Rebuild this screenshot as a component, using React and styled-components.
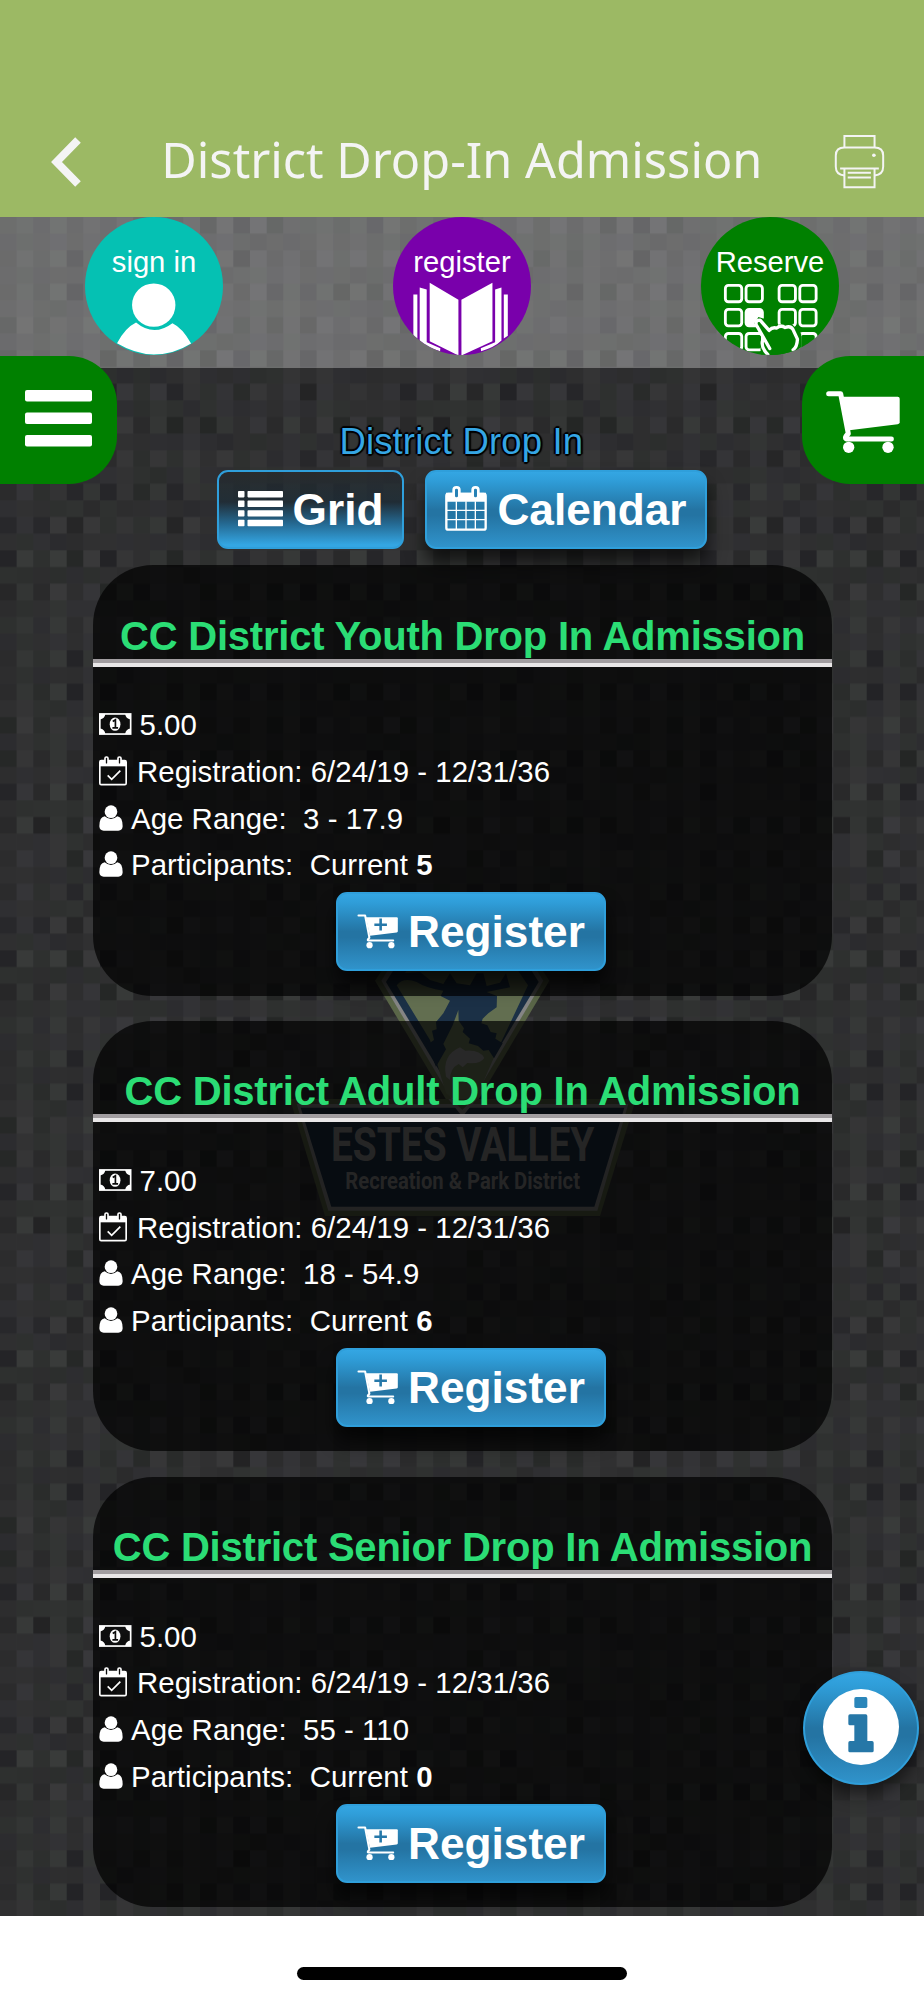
import styled, { createGlobalStyle, css } from "styled-components";

const GlobalStyle = createGlobalStyle`
  * {
    box-sizing: border-box;
  }

  body {
    margin: 0;
    background-color: #fff;
    font-family: "Liberation Sans", Arial, sans-serif;
  }
`;

const Screen = styled.div`
  display: flex;
  flex-direction: column;
  width: 924px;
  height: 2000px;
  overflow: hidden;
`;

const AppBar = styled.header`
  display: flex;
  align-items: center;
  justify-content: space-between;
  height: 216.67px;
  padding: 107px 41px 0 51px;
  flex-shrink: 0;
  background-color: #9cb964;
  color: #f4f4f4;
`;

const AppTitle = styled.h1`
  margin: 0;
  padding: 0 0 5px 8px;
  font-family: "Noto Sans", "Open Sans", sans-serif;
  font-size: 48.6px;
  font-weight: 400;
  line-height: 66px;
  white-space: nowrap;
`;

const Page = styled.main`
  position: relative;
  height: 1699.3px;
  flex-shrink: 0;
  overflow: hidden;
  background-color: #2d2d2e;
`;

const Backdrop = styled.svg`
  position: absolute;
  top: 0;
  left: 0;
`;

const Watermark = styled.svg`
  position: absolute;
  top: 743.33px;
  left: 270px;
`;

const Content = styled.div`
  position: relative;
`;

const QuickLinks = styled.nav`
  display: flex;
  justify-content: space-around;
  height: 151.3px;
  background-color: rgba(255, 255, 255, 0.3);
`;

const QuickLink = styled.a`
  position: relative;
  display: block;
  width: 138.5px;
  height: 138.5px;
  padding-top: 29px;
  overflow: hidden;
  border-radius: 50%;
  background-color: ${(props) => props.$color};
  color: #fff;
  font-size: 29.2px;
  line-height: 32px;
  text-align: center;
  white-space: nowrap;

  & > svg {
    position: absolute;
    top: 0;
    left: 0;
  }
`;

const Toolbar = styled.div`
  display: flex;
  justify-content: space-between;
  height: 102px;
  margin-top: -12px;
`;

const SideTab = styled.button`
  width: ${(props) => (props.$right ? "122.5px" : "117px")};
  height: 128px;
  padding: ${(props) => (props.$right ? "5px 0 0 24px" : "0 0 2px 24px")};
  display: flex;
  align-items: center;
  border: 0;
  border-radius: ${(props) => (props.$right ? "48px 0 0 48px" : "0 48px 48px 0")};
  background-color: #008000;
`;

const Heading = styled.h2`
  margin: 66px 0 0;
  padding-left: 4px;
  color: #35a6e4;
  font-size: 36.5px;
  font-weight: 400;
  line-height: 40px;
  letter-spacing: 0.15px;
  text-shadow: 2px 0 1px #000, -2px 0 1px #000, 0 2px 1px #000, 0 -2px 1px #000,
    1px 1px 1px #000, -1px -1px 1px #000;
`;

const ViewSwitch = styled.div`
  display: flex;
  justify-content: center;
  gap: 21px;
  margin-top: 11.7px;
`;

const Button = styled.button`
  display: inline-flex;
  align-items: center;
  justify-content: center;
  gap: 10px;
  width: ${(props) => props.$width}px;
  height: 79px;
  padding: 1px 0 0;
  border: 2px solid #2f9fdb;
  border-radius: 11px;
  color: #fff;
  font-family: inherit;
  font-size: 44.2px;
  font-weight: 700;
  background: linear-gradient(#34a6e3 0%, #2f9dd8 12%, #2474a3 50%, #2474a3 58%, #3093cb 100%);
  box-shadow: 0 14px 18px rgba(0, 0, 0, 0.65);

  & > svg {
    margin-top: -2px;
  }

  ${(props) =>
    props.$active &&
    css`
      background: linear-gradient(
        rgba(36, 40, 43, 0.6) 0%,
        rgba(28, 44, 55, 0.75) 40%,
        #24678f 68%,
        #34a6e3 97%
      );
      box-shadow: none;
    `}
`;

const CardList = styled.section`
  display: flex;
  flex-direction: column;
  gap: 25.3px;
  width: 739px;
  margin: 16.5px 0 0 93px;
`;

const Card = styled.article`
  height: 430.5px;
  border-radius: 60px;
  background-color: rgba(0, 0, 0, 0.7);
  color: #fff;
`;

const CardTitle = styled.h3`
  display: flex;
  align-items: flex-end;
  justify-content: center;
  height: 101.5px;
  margin: 0;
  padding-bottom: 5px;
  border-bottom: 4px solid #e9e7e8;
  box-shadow: inset 0 -4px #a19da0;
  color: #2bdd75;
  font-size: 40px;
  letter-spacing: -0.22px;
  line-height: 44px;
  white-space: nowrap;
`;

const Details = styled.ul`
  margin: 0;
  padding: 35px 0 0 6px;
  list-style: none;
`;

const Detail = styled.li`
  display: flex;
  align-items: center;
  gap: ${(props) => props.$gap ?? 8}px;
  height: 46.8px;
  font-size: 29.4px;
  letter-spacing: 0.04px;
  white-space: pre;

  & > svg {
    margin-bottom: 2px;
  }
`;

const CardAction = styled.div`
  display: flex;
  margin: 3.5px 0 0 243px;
`;

const InfoButton = styled.button`
  position: absolute;
  top: 1454.5px;
  right: 5px;
  display: grid;
  place-items: center;
  width: 116px;
  height: 114px;
  padding: 0 0 3px;
  border: 2px solid #2f9fdb;
  border-radius: 50%;
  background: linear-gradient(#34a6e3 0%, #2f9dd8 12%, #2474a3 50%, #2474a3 58%, #3093cb 100%);
  box-shadow: 0 10px 16px rgba(0, 0, 0, 0.5);
`;

const HomeArea = styled.footer`
  display: flex;
  justify-content: center;
  flex: 1;
  padding-top: 51px;
  background-color: #fff;
`;

const HomeIndicator = styled.div`
  width: 330px;
  height: 13px;
  border-radius: 7px;
  background-color: #000;
`;

// woven squares: even columns stay dark, odd columns are lit
const CELL = 16.667;
const TILE = 24;

function cellColor(col, row) {
  const seed = Math.sin(col * 127.1 + row * 311.7) * 43758.5453;
  const noise = seed - Math.floor(seed);
  const odd = col % 2 === 1;
  let tone = 45;
  if (odd && row % 2 === 1) tone = 50 + noise * 7;
  if (odd && row % 2 === 0) tone = 42 + noise * 11;
  if (!odd && row % 2 === 1) tone = 35 + noise * 13;
  if (!odd && row % 2 === 0) tone = 44 + noise * 4;
  const tint = Math.floor(noise * 97) % 3;
  return `rgb(${tone}, ${tone + (tint === 1 ? 2 : 0)}, ${tone + (tint === 2 ? 3 : 1)})`;
}

const cells = Array.from({ length: TILE * TILE }, (_, i) => ({
  col: i % TILE,
  row: Math.floor(i / TILE),
}));

function Texture() {
  return (
    <Backdrop width="924" height="1700">
      <defs>
        <pattern id="weave" width="400" height="400" y="-16.67" patternUnits="userSpaceOnUse">
          {cells.map(({ col, row }) => (
            <rect
              key={`${col}-${row}`}
              x={col * CELL}
              y={row * CELL}
              width={CELL + 0.3}
              height={CELL + 0.3}
              fill={cellColor(col, row)}
            />
          ))}
        </pattern>
      </defs>
      <rect width="924" height="1700" fill="url(#weave)" />
    </Backdrop>
  );
}

function DistrictLogo() {
  return (
    <Watermark width="390" height="280" viewBox="0 0 1170 840">
      <path d="M315 62L357 0H797L838 62L577 500Z" fill="#5a6648" />
      <path d="M334 62L372 0H782L820 62L577 470Z" fill="#858585" />
      <path d="M348 66L390 0H764L806 66L577 447Z" fill="#1b3046" />
      <path d="M380 76L425 10H729L774 76L672 292L625 400L577 440L528 400L480 240Z" fill="#626e50" />
      <path
        d="M380 76Q400 50 440 66Q470 85 520 92L512 108L540 122L520 160L498 186L500 208L486 212L492 240L478 250L466 240L498 320L528 268L520 252L548 196L565 150L566 182L582 205L578 216L600 236L596 250L624 258L640 272L656 270L672 295L698 250L676 236L680 220L662 216L652 196L634 190L638 176L655 160L680 142L681 108L650 96L720 82L708 40L690 68L650 78L640 40H620L600 76L560 70L540 40L520 72L480 60L450 36L400 40Z"
        fill="#1b3046"
      />
      <path
        d="M528 350Q515 285 570 262L586 272Q630 268 643 294Q630 314 592 309L578 322L566 312Q540 325 540 360Z"
        fill="#858585"
      />
      <path d="M60 417H1098L990 768H165Z" fill="#4f573d" />
      <path d="M80 432H1075L982 752H175Z" fill="#777" />
      <path d="M92 443H1063L973 740H184Z" fill="#18283b" />
      <path d="M535 417H620L577 470Z" fill="#777" />
      <path d="M545 417H610L577 450Z" fill="#4f573d" />
      <g fill="#7d7d7d" fontFamily="Roboto, sans-serif" fontWeight="700">
        <text x="183" y="604" fontSize="142" textLength="790" lengthAdjust="spacingAndGlyphs">
          ESTES VALLEY
        </text>
        <text x="226" y="686" fontSize="70" textLength="704" lengthAdjust="spacingAndGlyphs">
          Recreation &amp; Park District
        </text>
      </g>
    </Watermark>
  );
}

function BackIcon() {
  return (
    <svg width="30" height="50" viewBox="0 0 30 50" fill="none" stroke="currentColor">
      <path d="M27 3L5.5 25L27 47" strokeWidth="7.8" />
    </svg>
  );
}

function PrinterIcon() {
  return (
    <svg width="48.3" height="53" viewBox="1115 104 145 160" fill="none" stroke="currentColor" strokeWidth="6" overflow="visible">
      <path d="M1143 142V107H1234V142" />
      <path d="M1143 226Q1117 224 1117 200V166Q1117 142 1143 142H1234Q1260 142 1260 166V200Q1260 224 1234 226" />
      <path d="M1130 205H1247M1143 205V262H1234V205M1153 218H1223M1153 232H1223" />
      <circle cx="1232" cy="165" r="5.5" fill="currentColor" stroke="none" />
    </svg>
  );
}

function PersonArt() {
  return (
    <svg width="138.5" height="138.5" viewBox="0 0 415 415" fill="#fff">
      <circle cx="206" cy="264" r="65" />
      <path d="M153 316Q206 360 262 318Q292 332 318 379Q265 412 206 412Q150 410 96 378Q120 332 153 316Z" />
    </svg>
  );
}

function BookArt() {
  return (
    <svg width="138.5" height="138.5" viewBox="0 0 415 415" fill="#fff">
      <path d="M110 197L196 248V415L110 372Z" />
      <path d="M80 211L101 217V375L142 393L141 402Q100 390 80 370Z" />
      <path d="M61 232H73V364L61 356Z" />
      <g transform="translate(405 0) scale(-1 1)">
        <path d="M107 197L200 248V415L107 372Z" />
        <path d="M80 211L99 217V375L142 393L141 402Q100 390 80 370Z" />
        <path d="M61 232H73V364L61 356Z" />
      </g>
    </svg>
  );
}

function SeatsArt() {
  return (
    <svg width="138.5" height="138.5" viewBox="0 0 415 415" fill="none" stroke="#fff" strokeWidth="8.5">
      {[205, 277, 349].map((y) =>
        [73, 135, 234, 296].map((x) => (
          <rect
            key={`${x}-${y}`}
            x={x}
            y={y}
            width="49"
            height="49"
            rx="9"
            fill={x === 135 && y === 277 ? "#fff" : "none"}
          />
        ))
      )}
      <path d="M160 318L172 300L190 305L214 325L270 318L300 350L302 415H180L176 370L190 368Z" fill="#008000" stroke="none" />
      <path
        d="M206 394L165 322Q163 308 177 309L204 340Q214 329 227 333Q238 323 252 331Q268 325 275 336L289 366Q288 390 276 398M184 372Q180 392 200 412"
        strokeWidth="10"
        strokeLinecap="round"
        strokeLinejoin="round"
      />
    </svg>
  );
}

function MenuIcon() {
  return (
    <svg width="68" height="57" fill="#fff">
      <rect x="1" width="67" height="11.5" rx="2" />
      <rect x="1" y="22.5" width="67" height="11.5" rx="2" />
      <rect x="1" y="45" width="67" height="11.5" rx="2" />
    </svg>
  );
}

function CartIcon({ width, plus }) {
  return (
    <svg width={width} height={(width * 187) / 222} viewBox="0 0 222 187" fill="#fff">
      <path
        d="M8 8H44L67 128Q50 144 66 144H196"
        fill="none"
        stroke="#fff"
        strokeWidth={plus ? 11 : 15}
        strokeLinecap="round"
        strokeLinejoin="round"
      />
      <path d="M48 17H215Q221 17 221 23V94Q221 99 215 100L70 118Z" />
      <circle cx="68" cy="169" r="17" />
      <circle cx="186" cy="169" r="17" />
      {plus && <path d="M128 25V90M94 58H162" stroke="#2678a9" strokeWidth="14" />}
    </svg>
  );
}

function ListIcon() {
  return (
    <svg width="45" height="36" fill="#fff">
      {[0, 9.6, 19.2, 28.8].map((y) => (
        <g key={y}>
          <rect y={y} width="6.5" height="6.4" rx="0.8" />
          <rect x="9.5" y={y} width="35.5" height="6.4" rx="0.8" />
        </g>
      ))}
    </svg>
  );
}

function CalendarIcon() {
  return (
    <svg width="42" height="45" viewBox="0 0 126 135" fill="none" stroke="#fff">
      <rect x="4" y="24" width="118" height="107" rx="6" strokeWidth="7" />
      <path d="M3 20H123V47H3Z" fill="#fff" stroke="none" />
      <rect x="26" y="4" width="17" height="34" rx="8" fill="#2781b5" strokeWidth="8" />
      <rect x="83" y="4" width="17" height="34" rx="8" fill="#2781b5" strokeWidth="8" />
      <path d="M34 46V130M63 46V130M91 46V130M4 73H122M4 101H122" strokeWidth="4" />
    </svg>
  );
}

function MoneyIcon() {
  return (
    <svg width="32.5" height="22" viewBox="0 0 97 65" fill="none" stroke="#fff">
      <rect x="2.5" y="2.5" width="92" height="60" strokeWidth="5" />
      <path d="M3 3H19Q17 17 3 19ZM94 3H78Q80 17 94 19ZM3 62H19Q17 48 3 46ZM94 62H78Q80 48 94 46Z" fill="#fff" stroke="none" />
      <ellipse cx="48" cy="33" rx="16" ry="20" fill="#fff" stroke="none" />
      <path d="M41 25L49 20V44M40 44H57" stroke="#0c0c0c" strokeWidth="5" />
    </svg>
  );
}

function CalendarCheckIcon() {
  return (
    <svg width="28" height="30" viewBox="0 0 84 90" fill="none" stroke="#fff">
      <rect x="2.5" y="14" width="79" height="72" rx="4" strokeWidth="5" />
      <path d="M3 13H81V31H3Z" fill="#fff" stroke="none" />
      <rect x="18" y="3" width="9" height="22" rx="4" fill="#0c0c0c" strokeWidth="5" />
      <rect x="57" y="3" width="9" height="22" rx="4" fill="#0c0c0c" strokeWidth="5" />
      <path d="M26 58L38 70L64 44" strokeWidth="5" />
    </svg>
  );
}

function UserIcon() {
  return (
    <svg width="24" height="26" viewBox="0 0 72 78" fill="#fff">
      <circle cx="36" cy="20" r="19" />
      <path d="M17 34Q36 50 55 34Q71 36 71 64Q70 77 58 77H14Q2 77 1 64Q1 36 17 34Z" />
    </svg>
  );
}

function InfoIcon() {
  return (
    <svg width="76" height="76" viewBox="0 0 228 228">
      <circle cx="114" cy="114" r="114" fill="#fff" />
      <rect x="94" y="24" width="39" height="33" rx="5" fill="#2a86ba" />
      <path
        d="M81 76H128Q133 76 133 81V156H147Q152 156 152 161V185Q152 190 147 190H81Q76 190 76 185V161Q76 156 81 156H94V109H81Q76 109 76 104V81Q76 76 81 76Z"
        fill="#2677a7"
      />
    </svg>
  );
}

const programs = [
  { title: "CC District Youth Drop In Admission", price: "5.00", ages: "3 - 17.9", current: 5 },
  { title: "CC District Adult Drop In Admission", price: "7.00", ages: "18 - 54.9", current: 6 },
  { title: "CC District Senior Drop In Admission", price: "5.00", ages: "55 - 110", current: 0 },
];

function ProgramCard({ program }) {
  return (
    <Card>
      <CardTitle>{program.title}</CardTitle>
      <Details>
        <Detail>
          <MoneyIcon />
          <span>{program.price}</span>
        </Detail>
        <Detail $gap={10}>
          <CalendarCheckIcon />
          <span>Registration: 6/24/19 - 12/31/36</span>
        </Detail>
        <Detail>
          <UserIcon />
          <span>{`Age Range:  ${program.ages}`}</span>
        </Detail>
        <Detail>
          <UserIcon />
          <span>
            {"Participants:  Current "}
            <b>{program.current}</b>
          </span>
        </Detail>
      </Details>
      <CardAction>
        <Button $width={270}>
          <CartIcon width={41} plus />
          Register
        </Button>
      </CardAction>
    </Card>
  );
}

function App() {
  return (
    <Screen>
      <GlobalStyle />
      <AppBar>
        <BackIcon />
        <AppTitle>District Drop-In Admission</AppTitle>
        <PrinterIcon />
      </AppBar>
      <Page>
        <Texture />
        <DistrictLogo />
        <Content>
          <QuickLinks>
            <QuickLink $color="#05c1b3">
              sign in
              <PersonArt />
            </QuickLink>
            <QuickLink $color="#7900ab">
              register
              <BookArt />
            </QuickLink>
            <QuickLink $color="#008000">
              Reserve
              <SeatsArt />
            </QuickLink>
          </QuickLinks>
          <Toolbar>
            <SideTab>
              <MenuIcon />
            </SideTab>
            <Heading>District Drop In</Heading>
            <SideTab $right>
              <CartIcon width={74} />
            </SideTab>
          </Toolbar>
          <ViewSwitch>
            <Button $width={187} $active>
              <ListIcon />
              Grid
            </Button>
            <Button $width={282}>
              <CalendarIcon />
              Calendar
            </Button>
          </ViewSwitch>
          <CardList>
            {programs.map((program) => (
              <ProgramCard key={program.title} program={program} />
            ))}
          </CardList>
        </Content>
        <InfoButton>
          <InfoIcon />
        </InfoButton>
      </Page>
      <HomeArea>
        <HomeIndicator />
      </HomeArea>
    </Screen>
  );
}

export default App;
